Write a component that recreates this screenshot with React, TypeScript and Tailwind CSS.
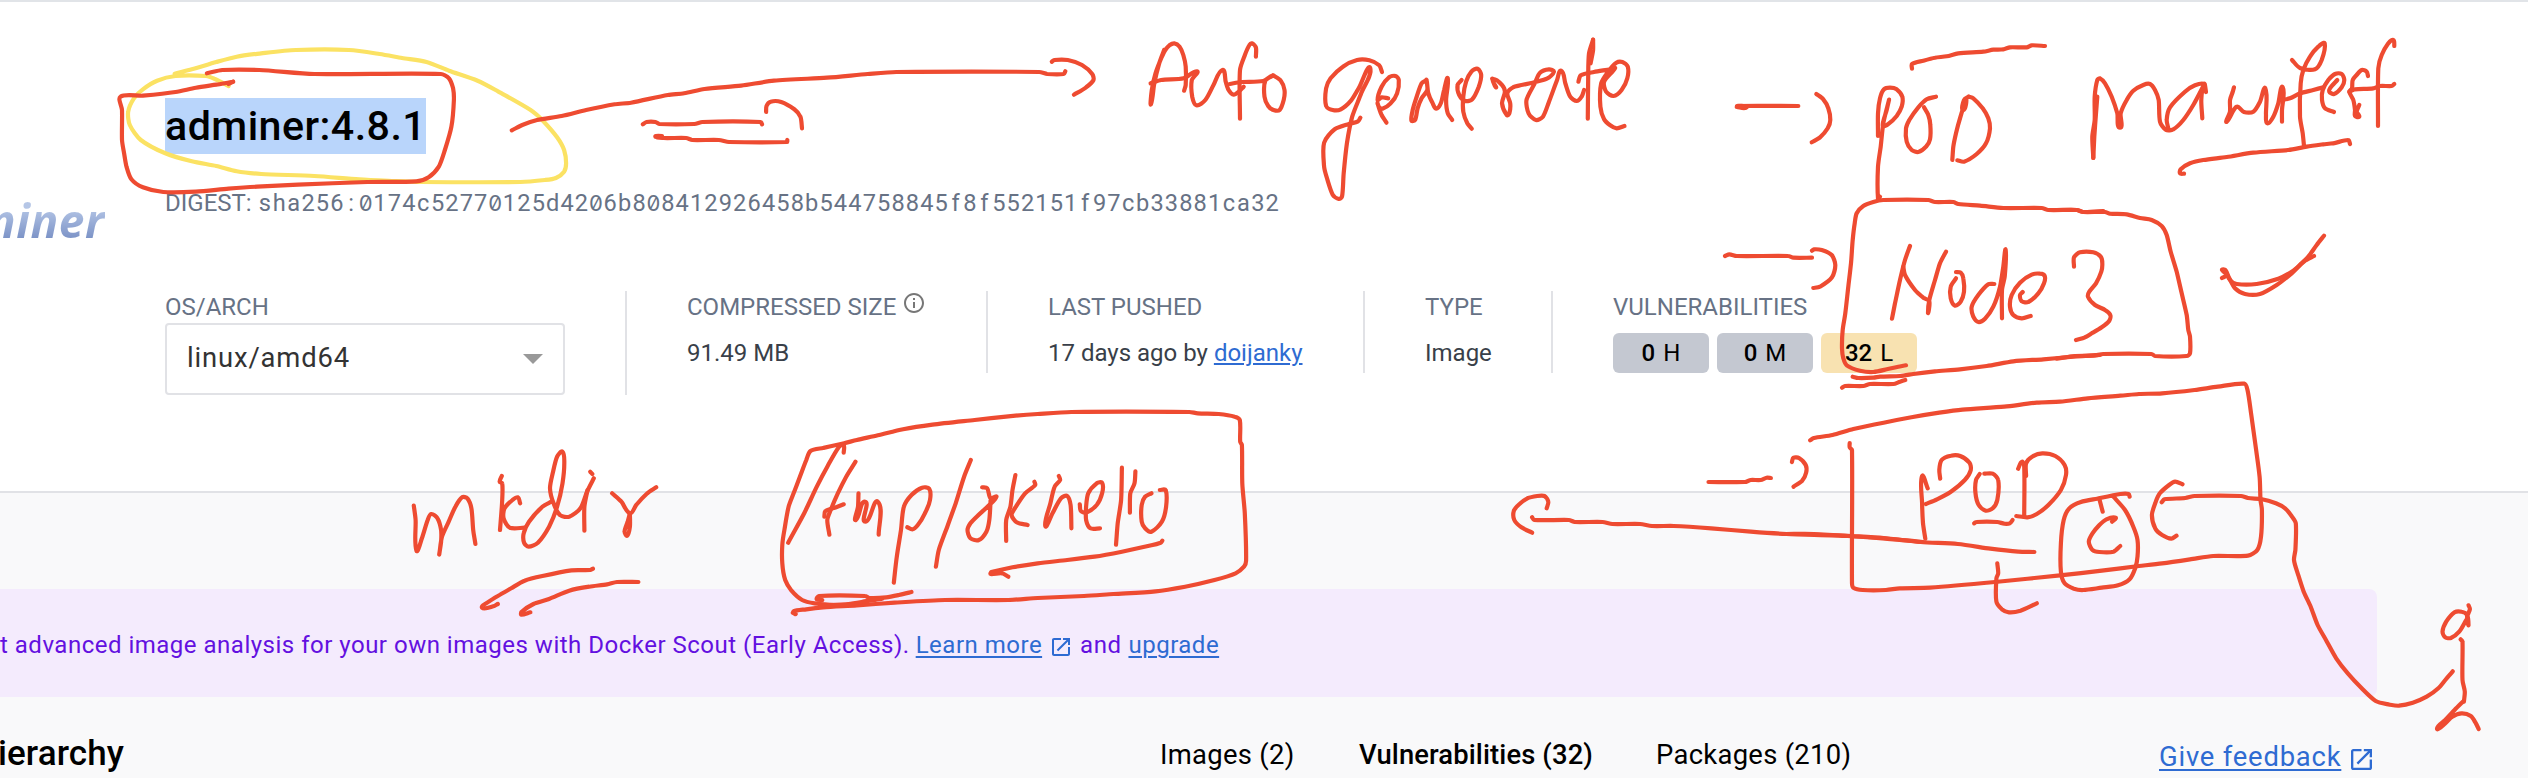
import type { ReactNode } from "react";

const DIGEST =
  "sha256:0174c52770125d4206b808412926458b544758845f8f552151f97cb33881ca32";

type Layer = { x: number; y: number; sx: number; color?: string; strokes: string[] };

const RED = "#ee4b31";
const YELLOW = "#fbe263";

/* Freehand marker strokes. Points are stored in each layer's own units and scaled when drawn. */
const LAYERS: Layer[] = [
  {
    x: 0, y: 0, sx: 2.45, color: YELLOW,
    strokes: [
      "560,258 540,245 525,236 505,228 430,228 385,242 350,268 328,295 314,335 318,375 345,420 405,460 470,484 530,498 580,514 640,522 770,528 880,538 960,543 1030,546 1275,546 1335,540 1362,534 1382,515 1387,490 1382,450 1365,412 1330,362 1300,330 1220,274 1170,242 1100,212 1045,186 985,174 930,162 855,150 725,150 640,160 580,170 530,186 470,208 428,221",
    ],
  },
  {
    x: 0, y: 0, sx: 2.45,
    strokes: [
      "507,220 545,210 635,210 770,222 1080,222 1100,235 1110,265 1112,300 1106,380 1090,450 1075,500 1050,532 1020,544 900,546 730,554 630,560 560,566 480,575 400,576 350,562 322,538 310,500 304,460 299,420 299,330 295,290 350,287 430,276 480,263 530,254 571,245",
      "560,252 571,245",
    ],
  },
  {
    x: 480, y: 0, sx: 2.45,
    strokes: [
      "78,391 105,374 140,360 200,348 260,330 330,313 370,308 460,285 500,280 550,267 640,257 720,242 850,233 950,222 1020,216 1370,216 1390,222 1430,222 1434,214",
      "1401,185 1407,180 1440,180 1475,195 1500,222 1503,240 1485,262 1455,284",
      "399,373 408,366 430,366 440,372 525,372 545,366 688,366 691,373",
      "430,410 446,408 430,410 450,414 505,414 520,420 585,420 610,426 752,426 753,420",
      "701,336 702,318 712,305 738,306 770,328 785,350 789,385",
    ],
  },
  {
    x: 1100, y: 0, sx: 2.45,
    strokes: [
      "157,150 145,190 133,250 125,312 127,270 136,220 150,175 160,150 170,136 182,130 195,140 204,165 210,200 210,255 206,272",
      "124,250 150,240 205,235 238,214 225,240 226,290 236,316 258,300 278,255 300,210 308,245 315,270 328,284 340,275 352,260",
      "343,356 343,210 355,165 366,135 372,130 382,142 382,170",
      "318,252 345,246 400,243 424,226 405,242 403,290 412,318 425,330 440,330 450,300 452,270 443,242 424,226",
      "691,216 684,196 660,181 630,180 595,200 565,235 554,265 554,318 570,330 590,328 615,302 635,262 662,204 640,280 618,350 605,430 597,520 593,590 585,597 570,584 555,530 549,500 549,428 575,388 610,372 632,364 638,353",
      "706,295 690,292 680,300 690,260 708,232 724,228 732,240 728,280 712,310 692,326 684,322 680,310 690,345 702,368",
      "800,240 788,250 776,290 766,330 763,362 772,360 778,325 788,295 802,270 800,240 804,278 815,310 824,326 835,310 843,270 852,235 848,300 852,340 863,360",
      "886,240 876,255 880,285 895,303 912,298 928,260 934,225 925,206 910,215 897,245 890,290 890,335 900,370 911,386",
      "961,236 970,262 963,238 985,255 992,275 985,310 997,346 1003,340 1005,310 998,280 1012,262 1060,248 1095,236 1112,215 1100,208 1078,218 1065,250 1045,300 1050,340 1068,360 1085,350 1100,305 1120,240 1130,212 1140,250 1152,290 1168,303 1180,290 1186,270",
      "1208,119 1198,160 1196,230 1195,356",
      "1208,119 1208,150 1202,190",
      "1172,245 1178,226 1210,216 1250,208 1262,204 1235,245 1240,275 1258,288 1278,270 1292,235 1293,200 1280,186 1265,188 1245,215 1228,250 1226,320 1235,358 1250,376 1266,385 1285,378",
    ],
  },
  {
    x: 1660, y: 0, sx: 3,
    strokes: [
      "756,206 756,192 790,182 825,173 860,169 895,160 970,155 1000,149 1030,148 1050,142 1100,142 1115,136 1155,138",
      "230,321 260,322 232,318 415,318",
      "469,282 490,298 505,325 511,360 503,385 480,412 455,427",
      "654,408 654,340 660,295 672,268 690,263 710,268 727,290 725,320 710,348 685,372 668,378 680,330 687,300 670,370 662,440 654,500 654,596 660,590",
      "828,290 800,298 775,322 748,360 738,385 740,425 755,450 775,456 798,440 810,418 811,375 805,345 792,322",
      "926,290 912,300 910,330 918,300 900,355 888,400 880,440 877,480",
      "926,290 940,295 968,325 985,355 990,385 978,430 950,462 912,485 892,481",
      "195,768 208,763 230,768 385,768 400,773 456,773",
      "456,752 462,748 485,750 515,765 526,795 516,832 480,860 460,864",
      "738,1096 715,1100 680,1108 640,1116 600,1112 560,1096 550,1075 546,1045 548,990 556,940 565,860 573,790 578,720 584,670 590,640 610,618 640,606 670,600 805,600 825,606 880,606 895,612 960,617 1030,624 1145,624 1165,630 1250,630 1270,636 1330,633",
      "750,738 735,780 720,840 705,910 696,956",
      "730,800 735,825 765,870 790,893 808,904 804,938 808,900 825,840 840,790 858,755",
      "888,835 872,860 872,895 885,917 902,905 912,875 910,835 902,818 888,816",
      "1003,852 985,853 955,885 935,920 940,950 955,966 975,956 1000,920 1020,860 1030,800 1037,750 1034,830 1026,870 1026,955",
      "1088,876 1080,885 1085,904 1105,906 1135,880 1152,850 1154,828 1140,821 1115,824 1080,848 1055,885 1050,920 1060,945 1085,955 1112,948",
      "578,1130 595,1134 640,1133 660,1130 720,1128 760,1122 825,1114 900,1108 980,1098 1060,1084 1150,1078 1240,1070 1320,1065",
      "546,1163 555,1158 610,1158 630,1152 700,1152 720,1145 736,1140",
    ],
  },
  {
    x: 2060, y: 0, sx: 3,
    strokes: [
      "100,474 97,410 104,360 104,290 112,240 120,235 135,250 155,290 172,340 180,383 182,340 200,300 220,272 250,255 270,252 285,270 296,300 300,365 318,390 340,388 370,360 400,315 425,268 432,252 405,256 375,275 330,322 320,360 325,385",
      "100,474 103,410 108,340 112,290",
      "438,276 432,252 424,300 427,355",
      "522,262 518,276 510,300 510,335 500,365 530,320 552,336 580,335 600,305 616,265 618,345 622,370 640,350 655,310 668,262 666,330 666,365",
      "665,300 690,295 720,280 760,270 790,262",
      "696,180 720,204 765,208 785,180 794,130 775,140 750,170 730,210 722,250 720,350 728,400 732,438",
      "832,240 812,262 808,275 822,282 845,262 853,240 845,222 825,222 805,240 788,270 786,300 795,325 822,336",
      "924,228 920,215 905,210 890,225 878,240 876,265 868,275 880,300 885,330 885,348 898,350 890,335 898,315",
      "868,275 885,268 940,265 960,258 995,258 1003,252",
      "1003,138 1000,120 985,130 965,165 955,205 954,378",
      "372,521 360,520 362,508 390,490 430,480 500,471 580,458 685,450 740,440 790,433 820,430 865,420 870,432",
      "-10,630 50,630 70,636 135,636 150,641 200,643 240,654 275,660 305,678 320,705 332,755 350,815 365,880 380,945 385,990 390,1010 390,1060 380,1068 285,1068 275,1062 130,1062 100,1067 45,1068 -10,1076",
      "42,800 42,772 60,757 100,757 122,770 127,790 124,815 108,850 88,875 84,890 105,915 135,930 151,945 148,962 125,982 95,1000 75,1012 48,1020",
      "792,707 770,735 745,770 720,795 695,820 650,855 600,882 555,882 525,865 508,835 496,810 486,810 500,825 486,834",
      "496,812 510,840 530,852 590,852 655,836 700,812 735,782 762,768",
    ],
  },
  {
    x: 0, y: 390, sx: 2.24,
    strokes: [
      "927,347 931,390 933,482 945,445 958,390 966,372 980,385 988,420 988,455 984,492 990,440 1005,395 1020,350 1035,322 1047,325 1056,355 1060,420 1065,462",
      "1124,258 1119,275 1125,280 1125,330 1120,420",
      "1165,340 1160,322 1148,330 1130,355 1128,385 1142,413 1175,413",
      "1235,335 1215,350 1185,395 1173,430 1174,458 1184,470 1205,458 1230,410 1248,350 1260,280 1264,220 1260,185 1248,200 1238,250 1232,295 1240,340 1255,376 1275,380 1300,355 1315,305 1330,265",
      "1309,422 1309,350 1316,300",
      "1322,245 1327,252",
      "1371,310 1392,335 1411,370 1425,345 1450,310 1470,292",
      "1411,370 1411,410 1405,437 1399,425 1406,395 1411,370",
      "1328,536 1322,540 1280,541 1215,558 1175,572 1145,595 1115,618 1095,635 1080,653 1105,649 1115,642",
      "1430,576 1382,576 1360,583 1320,590 1275,602 1230,627 1195,642 1168,666 1168,674 1188,667",
    ],
  },
  {
    x: 680, y: 390, sx: 2.376,
    strokes: [
      "268,668 275,672 270,664 300,658 340,652 420,646 510,638 630,630 780,630 850,624 960,618 1030,612 1130,604 1200,590 1270,570 1320,550 1340,530 1345,512 1342,370 1336,280 1335,165 1331,155 1330,90 1318,80 1280,72 1230,70 1210,66 930,66 850,72 780,79 700,90 600,104 530,118 470,136 420,150 390,160 340,174 310,183 300,210 285,260 270,310 258,350 248,420 243,465 243,520 250,570 265,602 290,630 320,640 370,646",
      "389,188 389,165 378,170 350,230 325,290 295,370 257,458",
      "417,215 395,260 375,310 358,360 350,390 355,434",
      "389,343 365,354 345,364 343,380",
      "424,310 423,350 418,390 440,335 440,395 470,335 472,434",
      "508,578 515,500 525,420 532,350 550,315 575,293 592,296 594,330 582,370 565,405 553,418 540,412",
      "691,210 675,260 655,340 635,410 615,480 608,530",
      "718,292 730,295 738,325 752,320 735,345 705,380 690,400 683,420 690,445 710,450 728,425 735,390 738,330",
      "797,255 790,300 785,350 775,390 775,453",
      "842,275 844,285 820,310 798,350 788,375 800,397 826,405",
      "900,258 903,270 890,290 880,340 868,408 885,370 905,325 920,318 928,345 930,415",
      "950,343 952,362 965,368 990,345 1003,310 1003,278 990,280 970,310 965,350 965,390 975,415 998,415",
      "1050,233 1048,330 1040,400 1036,464",
      "1082,244 1080,280 1070,310 1069,368",
      "1140,300 1154,300 1155,350 1145,395 1120,425 1105,415 1097,395 1097,345 1105,320 1120,310",
      "1146,452 1142,458 1120,466 1050,485 985,500 920,510 850,520 790,532 740,546 738,552 765,550 780,560",
      "338,630 325,628 330,618 440,618 450,624 490,622 520,615 550,606",
      "340,646 400,642 450,632 480,626",
    ],
  },
  {
    x: 1300, y: 390, sx: 2.529,
    strokes: [
      "1033,276 1125,276 1140,270 1165,270 1180,263 1191,264",
      "1244,216 1248,203 1262,204 1279,225 1280,248 1270,272 1248,290",
      "624,355 628,335 618,318 600,318 575,325 555,342 541,362 542,390 560,412 587,428",
      "587,382 592,390 680,390 695,396 765,396 790,402 860,402 890,408 945,408 1040,415 1140,425 1230,432 1385,438 1480,446 1575,456",
    ],
  },
  {
    x: 1800, y: 370, sx: 2.154,
    strokes: [
      "-30,492 30,492 110,498 180,504 260,516 340,522 410,536 470,545 505,546",
      "22,211 30,204 70,195 115,177 180,158 240,142 300,128 350,119 440,110 510,98 560,95 620,85 690,77 730,72 780,70 850,60 900,50 957,41 964,60 972,135 982,235 990,320 992,390 995,420 993,500 985,540 965,557 890,558 840,568 780,580 730,588 650,602 560,616 420,636 280,653 215,655 185,660 135,660 115,653 112,640 112,240 107,232 107,219",
      "270,506 265,460 263,400 263,318 275,355",
      "302,326 300,300 305,270 325,257 345,258 365,278 368,300 355,330 325,365 295,388 271,402",
      "387,312 379,330 378,370 385,405 400,422 415,415 425,390 427,330 415,311 397,311",
      "470,296 478,275 483,290 483,440",
      "487,318 487,280 500,260 522,250 550,258 570,285 573,315 562,360 535,405 510,432 490,442 466,438",
      "375,460 380,456 425,456 440,461 452,460 458,450",
      "710,380 708,372 690,372 640,386 605,396 580,415 568,450 562,520 562,605 570,640 590,656 610,660 650,653 685,646 710,628 722,595 727,560 727,510 718,470 700,420 675,380",
      "645,388 652,425",
      "672,455 680,443 660,448 645,465 630,490 622,515 630,540 645,546 675,545 690,528",
      "824,343 808,335 795,345 775,370 765,400 758,435 765,475 780,495 800,506 811,497",
      "779,397 785,388 830,384 850,378 950,378 965,384 995,388 1025,400 1045,415 1060,440 1068,460 1067,540 1064,570 1072,610 1085,665 1100,710 1115,765 1135,815 1155,865 1180,910 1210,955 1240,993 1270,1004 1290,1007 1320,998 1350,980 1375,955 1390,930 1406,904",
      "425,580 427,610 423,625 423,695 435,718 450,727 475,722 510,700",
      "1440,706 1443,718 1437,740 1440,765 1437,735 1425,725 1410,727 1392,755 1384,785 1390,802 1402,804 1420,785 1435,750",
      "1423,808 1427,815 1427,930 1432,965 1430,995",
      "1430,992 1410,1020 1390,1050 1372,1076 1390,1060 1405,1040 1425,1030 1445,1038 1455,1058 1462,1077",
    ],
  },
];

function strokePath(points: string, l: Layer): string {
  const p = points.split(" ").map((s) => {
    const [x, y] = s.split(",").map(Number);
    return [l.x + x / l.sx, l.y + y / 3];
  });
  let d = `M${p[0][0].toFixed(1)} ${p[0][1].toFixed(1)}`;
  for (let i = 0; i < p.length - 1; i++) {
    const a = p[Math.max(0, i - 1)];
    const b = p[i];
    const c = p[i + 1];
    const e = p[Math.min(p.length - 1, i + 2)];
    const len = Math.hypot(c[0] - b[0], c[1] - b[1]);
    const t1 = Math.hypot(c[0] - a[0], c[1] - a[1]) || 1;
    const t2 = Math.hypot(e[0] - b[0], e[1] - b[1]) || 1;
    const k = len * 0.26;
    const x1 = b[0] + ((c[0] - a[0]) / t1) * k;
    const y1 = b[1] + ((c[1] - a[1]) / t1) * k;
    const x2 = c[0] - ((e[0] - b[0]) / t2) * k;
    const y2 = c[1] - ((e[1] - b[1]) / t2) * k;
    d += `C${x1.toFixed(1)} ${y1.toFixed(1)} ${x2.toFixed(1)} ${y2.toFixed(1)} ${c[0].toFixed(1)} ${c[1].toFixed(1)}`;
  }
  return d;
}

function Markup() {
  return (
    <svg className="pointer-events-none absolute inset-0" width="2528" height="778" viewBox="0 0 2528 778" fill="none" strokeWidth="4.2" strokeLinecap="round" strokeLinejoin="round">
      {LAYERS.map((l, i) => (
        <g key={i} stroke={l.color ?? RED}>
          {l.strokes.map((s, j) => (
            <path key={j} d={strokePath(s, l)} />
          ))}
        </g>
      ))}
    </svg>
  );
}

function ExternalIcon({ className }: { className: string }) {
  return (
    <svg className={className} viewBox="3 3 18 18" fill="currentColor">
      <path d="M19 19H5V5h7V3H5c-1.11 0-2 .9-2 2v14c0 1.1.89 2 2 2h14c1.1 0 2-.9 2-2v-7h-2v7zM14 3v2h3.59l-9.83 9.83 1.41 1.41L19 6.41V10h2V3h-7z" />
    </svg>
  );
}

function InfoIcon() {
  return (
    <svg className="mt-[2px] ml-[8px] size-[20px] shrink-0 text-[#777]" viewBox="2 2 20 20" fill="currentColor">
      <path d="M11 7h2v2h-2zm0 4h2v6h-2zm1-9C6.48 2 2 6.48 2 12s4.48 10 10 10 10-4.48 10-10S17.52 2 12 2zm0 18c-4.41 0-8-3.59-8-8s3.59-8 8-8 8 3.59 8 8-3.59 8-8 8z" />
    </svg>
  );
}

function Field({ label, width, icon, children }: { label: string; width: string; icon?: ReactNode; children: ReactNode }) {
  return (
    <div className={`flex h-[82px] shrink-0 flex-col border-l-2 border-[#e1e2e6] pl-[60px] ${width}`}>
      <div className="flex h-[32px] text-[#677285]">
        <span className="leading-[32px]">{label}</span>
        {icon}
      </div>
      {children}
    </div>
  );
}

function Chip({ count, level, color }: { count: string; level: string; color: string }) {
  return (
    <span className={`flex h-[40px] w-[96px] items-center justify-center gap-[8px] rounded-[6px] text-black ${color}`}>
      <span className="font-medium">{count}</span>
      <span>{level}</span>
    </span>
  );
}

export default function App() {
  return (
    <div className="relative h-[778px] w-[2528px] overflow-hidden bg-[#f9f9fa] font-['Roboto',sans-serif] text-[24px] whitespace-nowrap text-[#393f49]">
      <header className="flex h-[493px] border-t-2 border-b-2 border-t-[#e1e4e8] border-b-[#e1e2e6] bg-white">
        <div className="flex w-[105px] shrink-0 justify-end pt-[186px]">
          <span className="h-[64px] bg-gradient-to-b from-[#b5c6e6] from-30% to-[#7b92c6] to-80% bg-clip-text font-['Open_Sans',sans-serif] text-[46px] leading-[64px] font-bold tracking-[0.6px] text-transparent italic blur-[0.7px]">
            adminer
          </span>
        </div>
        <div className="flex flex-1 flex-col pl-[60px]">
          <h1 className="mt-[96px] flex h-[56px]">
            <span className="bg-[#b9d5fb] text-[41.2px] leading-[56px] font-medium tracking-[0.45px] text-black">adminer:4.8.1</span>
          </h1>
          <p className="mt-[33px] flex h-[32px] leading-[32px] text-[#677285]">
            <span className="mr-[6px]">DIGEST:</span>
            <span className="text-[23.6px]">
              {DIGEST.split("").map((ch, i) => (
                <span key={i} className={`inline-block w-[14.4px] text-center ${ch === "0" ? "font-['Inter'] text-[22px] slashed-zero" : ""}`}>
                  {ch}
                </span>
              ))}
            </span>
          </p>
          <div className="mt-[72px] flex">
            <div className="w-[460px] shrink-0">
              <div className="h-[32px] leading-[32px] text-[#677285]">OS/ARCH</div>
              <div className="flex h-[72px] w-[400px] items-center justify-between rounded-[4px] border-2 border-[#e1e2e6] px-[20px] text-[27.4px] tracking-[0.85px] text-[#333]">
                <span>linux/amd64</span>
                <svg className="h-[10px] w-[20px]" viewBox="0 0 20 10" fill="#999">
                  <path d="M0 0h20L10 10z" />
                </svg>
              </div>
            </div>
            <div className="h-[104px] w-[2px] bg-[#e1e2e6]" />
            <div className="-ml-[2px] flex">
              <Field label="COMPRESSED SIZE" width="w-[361px]" icon={<InfoIcon />}>
                <span className="mt-[14px] leading-[32px]">91.49 MB</span>
              </Field>
              <Field label="LAST PUSHED" width="w-[377px]">
                <span className="mt-[14px] leading-[32px]">
                  17 days ago by <a className="text-[#2e6bd2] underline decoration-[1.5px] underline-offset-[2px]">doijanky</a>
                </span>
              </Field>
              <Field label="TYPE" width="w-[188px]">
                <span className="mt-[14px] leading-[32px]">Image</span>
              </Field>
              <Field label="VULNERABILITIES" width="w-[380px]">
                <div className="mt-[10px] flex gap-[8px]">
                  <Chip count="0" level="H" color="bg-[#c4c8d1]" />
                  <Chip count="0" level="M" color="bg-[#c4c8d1]" />
                  <Chip count="32" level="L" color="bg-[#f8e2b1]" />
                </div>
              </Field>
            </div>
          </div>
        </div>
      </header>

      <section className="mt-[96px] flex h-[108px] w-[2377px] items-center rounded-r-[8px] bg-[#f4ebfd] pt-[4px] tracking-[0.5px] text-[#6310e0]">
        <span>t advanced image analysis for your own images with Docker Scout (Early Access).</span>
        <a className="ml-[6px] text-[#2e6bd2] underline decoration-[1.5px] underline-offset-[3px]">Learn more</a>
        <ExternalIcon className="mt-[4px] mr-[10px] ml-[10px] size-[18px] text-[#2e6bd2]" />
        <span>and</span>
        <a className="ml-[7px] text-[#2e6bd2] underline decoration-[1.5px] underline-offset-[3px]">upgrade</a>
      </section>

      <nav className="flex h-[81px] items-end pb-[1px] text-[27.4px] tracking-[0.3px] text-black">
        <h2 className="-ml-[2px] w-[1162px] pb-[1px] text-[35px] leading-[44px] font-medium tracking-[0.1px]">ierarchy</h2>
        <span className="w-[199px] leading-[44px]">Images (2)</span>
        <span className="w-[297px] leading-[44px] font-medium tracking-[0.12px]">Vulnerabilities (32)</span>
        <span className="w-[503px] leading-[44px]">Packages (210)</span>
        <a className="leading-[40px] tracking-[0.8px] text-[#2e6bd2] underline decoration-[1.5px] underline-offset-[3px]">Give feedback</a>
        <ExternalIcon className="mb-[7px] ml-[10px] size-[21px] text-[#2e6bd2]" />
      </nav>

      <Markup />
    </div>
  );
}
